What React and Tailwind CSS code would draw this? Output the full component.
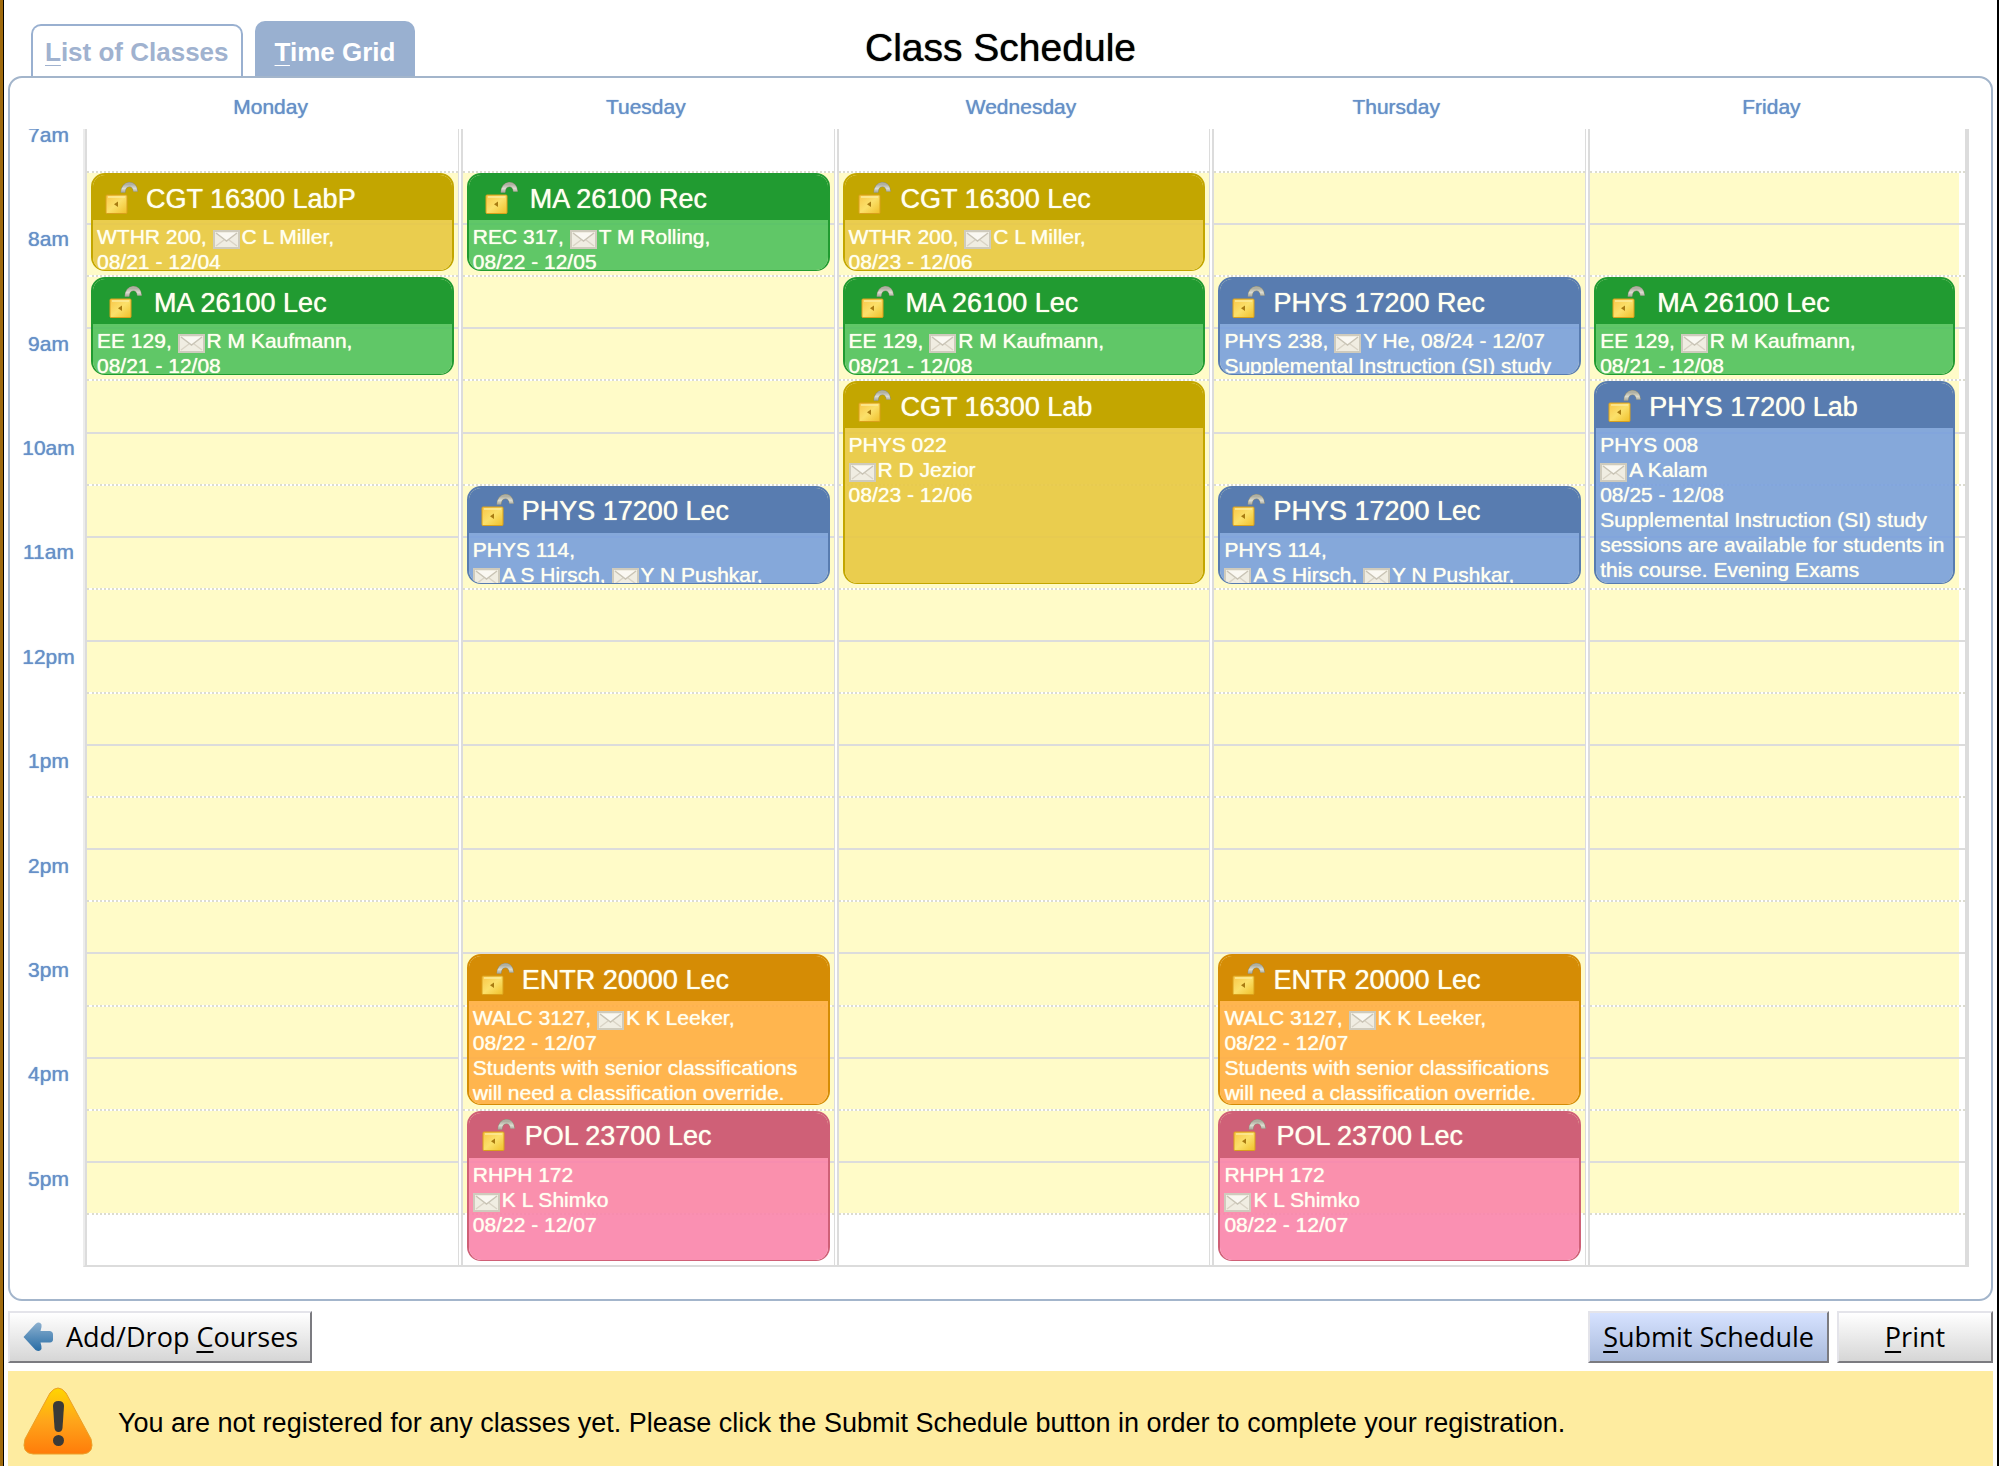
import React from "react";

const THEMES = {
  gold: { frame: "border-[#c3a600]", head: "bg-[#c3a600]", body: "bg-[#e8c840]/90" },
  green: { frame: "border-[#219b31]", head: "bg-[#219b31]", body: "bg-[#4fc15c]/90" },
  blue: { frame: "border-[#587cb0]", head: "bg-[#587cb0]", body: "bg-[#789fdc]/90" },
  orange: { frame: "border-[#d58c05]", head: "bg-[#d58c05]", body: "bg-[#ffad40]/90" },
  pink: { frame: "border-[#cf6077]", head: "bg-[#cf6077]", body: "bg-[#fa84aa]/90" },
};

const INSETS = {
  wide: "pl-3 gap-2",
  medium: "pl-[13px] gap-2.5",
  narrow: "pl-4 gap-3",
};

const SLOTS = {
  "7:30-8:30": "row-[2/4]",
  "8:30-9:30": "row-[4/6]",
  "9:30-11:30": "row-[6/10]",
  "10:30-11:30": "row-[8/10]",
  "15:00-16:30": "row-[17/20]",
  "16:30-18:00": "row-[20/23]",
};

const HOURS = ["7am", "8am", "9am", "10am", "11am", "12pm", "1pm", "2pm", "3pm", "4pm", "5pm"];

const phys114 = {
  slot: "10:30-11:30", theme: "blue", inset: "wide", title: "PHYS 17200 Lec",
  lines: ["PHYS 114,", ["@", "A S Hirsch, ", "@", "Y N Pushkar,"]],
};
const entr = {
  slot: "15:00-16:30", theme: "orange", inset: "wide", title: "ENTR 20000 Lec",
  lines: [
    ["WALC 3127, ", "@", "K K Leeker,"], "08/22 - 12/07",
    "Students with senior classifications", "will need a classification override.",
  ],
};
const pol = {
  slot: "16:30-18:00", theme: "pink", inset: "medium", title: "POL 23700 Lec",
  lines: ["RHPH 172", ["@", "K L Shimko"], "08/22 - 12/07"],
};
const maLec = {
  slot: "8:30-9:30", theme: "green", inset: "narrow", title: "MA 26100 Lec",
  lines: [["EE 129, ", "@", "R M Kaufmann,"], "08/21 - 12/08"],
};

const DAYS = [
  {
    name: "Monday",
    events: [
      {
        slot: "7:30-8:30", theme: "gold", inset: "wide", title: "CGT 16300 LabP",
        lines: [["WTHR 200, ", "@", "C L Miller,"], "08/21 - 12/04"],
      },
      maLec,
    ],
  },
  {
    name: "Tuesday",
    events: [
      {
        slot: "7:30-8:30", theme: "green", inset: "narrow", title: "MA 26100 Rec",
        lines: [["REC 317, ", "@", "T M Rolling,"], "08/22 - 12/05"],
      },
      phys114, entr, pol,
    ],
  },
  {
    name: "Wednesday",
    events: [
      {
        slot: "7:30-8:30", theme: "gold", inset: "medium", title: "CGT 16300 Lec",
        lines: [["WTHR 200, ", "@", "C L Miller,"], "08/23 - 12/06"],
      },
      maLec,
      {
        slot: "9:30-11:30", theme: "gold", inset: "medium", title: "CGT 16300 Lab",
        lines: ["PHYS 022", ["@", "R D Jezior"], "08/23 - 12/06"],
      },
    ],
  },
  {
    name: "Thursday",
    events: [
      {
        slot: "8:30-9:30", theme: "blue", inset: "wide", title: "PHYS 17200 Rec",
        lines: [["PHYS 238, ", "@", "Y He, 08/24 - 12/07"], "Supplemental Instruction (SI) study"],
      },
      phys114, entr, pol,
    ],
  },
  {
    name: "Friday",
    events: [
      maLec,
      {
        slot: "9:30-11:30", theme: "blue", inset: "wide", title: "PHYS 17200 Lab",
        lines: [
          "PHYS 008", ["@", "A Kalam"], "08/25 - 12/08", "Supplemental Instruction (SI) study",
          "sessions are available for students in", "this course. Evening Exams",
        ],
      },
    ],
  },
];

function UnlockIcon() {
  return (
    <svg viewBox="0 0 33 34" className="h-[34px] w-[33px] shrink-0" aria-hidden="true">
      <defs>
        <linearGradient id="lockBody" x1="0" y1="0" x2="1" y2="1">
          <stop offset="0" stopColor="#f9c648" />
          <stop offset="0.5" stopColor="#fbe06a" />
          <stop offset="1" stopColor="#f0c02a" />
        </linearGradient>
        <linearGradient id="lockShackle" x1="0" y1="0" x2="0" y2="1">
          <stop offset="0" stopColor="#b0b0a2" />
          <stop offset="0.5" stopColor="#dcdcd0" />
          <stop offset="1" stopColor="#a4a498" />
        </linearGradient>
      </defs>
      <path d="M18 11.500C18 1.500 30 0.500 30.500 10.500" fill="none" stroke="#8f8f79" strokeWidth="5" />
      <path d="M18 11.500C18 1.500 30 0.500 30.500 10.500" fill="none" stroke="url(#lockShackle)" strokeWidth="4" />
      <rect x="1" y="14" width="21" height="18.500" rx="1" fill="url(#lockBody)" stroke="#d9a01c" />
      <path d="M3 16h17" stroke="#fdeb9a" strokeWidth="1.500" />
      <path d="M13 20.500v5.500l-4-2.750z" fill="#a87b12" />
    </svg>
  );
}

function MailIcon() {
  return (
    <svg viewBox="0 0 27 19" className="mr-0.5 inline-block h-[19px] w-[27px] align-[-5px]" role="img" aria-label="Email">
      <rect x="1" y="1" width="25" height="17" fill="#f0ede2" stroke="#cfcbbd" strokeWidth="2" />
      <path d="M3 16l8-6M24 16l-8-6" stroke="#d9d4c6" strokeWidth="1.500" />
      <path d="M3 3l10.500 8L24 3" fill="#faf8f2" stroke="#c9c4b6" strokeWidth="1.500" />
    </svg>
  );
}

function Line({ parts }) {
  const list = Array.isArray(parts) ? parts : [parts];
  return (
    <div className="h-[25px] whitespace-pre">
      {list.map((p, i) => (p === "@" ? <MailIcon key={i} /> : <span key={i}>{p}</span>))}
    </div>
  );
}

function Meeting({ event, last }) {
  const t = THEMES[event.theme];
  return (
    <article
      className={`${SLOTS[event.slot]} ${t.frame} ${last ? "mr-2.5" : "mr-1"} relative col-start-1 mt-0.5 mb-1 ml-1 flex min-h-0 flex-col overflow-hidden rounded-[14px] border-2 border-b text-[#fffff0] [text-shadow:0_0_1px_currentColor]`}
    >
      <header className={`${t.head} ${INSETS[event.inset]} flex h-[45px] shrink-0 items-center`}>
        <UnlockIcon />
        <h3 className="pt-0.5 text-[27px] leading-8 whitespace-nowrap">{event.title}</h3>
      </header>
      <div className={`${t.body} min-h-0 grow overflow-hidden pt-1 pl-1 text-[21px] leading-[25px]`}>
        {event.lines.map((l, i) => (
          <Line key={i} parts={l} />
        ))}
      </div>
    </article>
  );
}

function Day({ day, last }) {
  return (
    <section
      aria-label={day.name}
      className={`${last ? "basis-2.5 border-r-4" : "basis-0 border-r"} grid min-w-0 grow grid-cols-1 grid-rows-[repeat(22,minmax(0,1fr))] border-l-2 border-[#dcdcdc]`}
    >
      {HOURS.flatMap((h, i) => [
        <div
          key={h}
          style={{ gridRow: i * 2 + 1 }}
          className="col-start-1 flex border-t-2 border-t-[#dcdcdc]"
        >
          <div className={`${i > 0 ? "bg-[#fffbc8]" : ""} ${last ? "mr-1.5" : ""} grow`} />
        </div>,
        <div
          key={h + "half"}
          style={{ gridRow: i * 2 + 2 }}
          className="col-start-1 flex border-t-2 border-dotted border-t-[#dcdcd0]"
        >
          <div className={`${i < 10 ? "bg-[#fffbc8]" : ""} ${last ? "mr-1.5" : ""} grow`} />
        </div>,
      ])}
      {day.events.map((e) => (
        <Meeting key={e.slot} event={e} last={last} />
      ))}
    </section>
  );
}

const buttonBase =
  "flex h-[52px] items-center justify-center border-2 border-t-[#e4e4ea] border-l-[#e4e4ea] border-r-[#7b7b80] border-b-[#7b7b80] font-['Open_Sans','Noto_Sans',sans-serif] text-[27px] leading-8 text-black";

function BackArrow() {
  return (
    <svg viewBox="0 0 32 32" className="h-8 w-8 shrink-0" aria-hidden="true">
      <defs>
        <linearGradient id="arrowFill" x1="0" y1="0" x2="0" y2="1">
          <stop offset="0" stopColor="#8cb0cf" />
          <stop offset="1" stopColor="#276ca5" />
        </linearGradient>
      </defs>
      <path
        d="M1.500 16L13.500 3Q17.500 0 19.500 3.500Q20 6 18.500 10H28Q31 10.500 31 13.500V18.500Q31 21 28 21.500H18.500Q20 26 19.500 28Q17.500 31.500 13.500 29Z"
        fill="url(#arrowFill)"
      />
    </svg>
  );
}

function WarningIcon() {
  return (
    <svg viewBox="0 0 70 68" className="h-[68px] w-[70px] shrink-0" aria-hidden="true">
      <defs>
        <linearGradient id="warnFill" x1="0" y1="0" x2="0" y2="1">
          <stop offset="0" stopColor="#ffd500" />
          <stop offset="0.500" stopColor="#ffa51a" />
          <stop offset="1" stopColor="#ff7c0a" />
        </linearGradient>
      </defs>
      <path
        d="M27 6Q35 -4 43 6L68 52Q72 66 60 67H10Q-2 66 2 52Z"
        fill="url(#warnFill)"
        stroke="#eba028"
      />
      <path d="M30 19Q30 14 35.500 14Q41 14 41 19L39.500 41Q39 45 35.500 45Q32 45 31.500 41Z" fill="#3a3a38" />
      <circle cx="35.500" cy="53.500" r="5.500" fill="#3a3a38" />
    </svg>
  );
}

export default function App() {
  return (
    <div className="flex min-h-screen border-r-2 border-l-[3px] border-r-black border-l-[#a06a0c] bg-white font-['Liberation_Sans',Arial,sans-serif]">
      <div className="flex min-w-0 grow flex-col border-l border-black px-1">
        <header className="grid grid-cols-[1fr_auto_1fr] items-end">
          <div className="flex items-end gap-3 pt-[21px] pl-[23px]" role="tablist">
            <button role="tab" aria-selected="false" className="h-[52px] rounded-t-[10px] border-2 border-b-0 border-[#99b0d0] px-3 pt-0.5 text-[26px] leading-8 font-bold whitespace-nowrap text-[#a0b2cf]">
              <span className="underline decoration-1 underline-offset-4">L</span>ist of Classes
            </button>
            <button role="tab" aria-selected="true" className="h-[55px] rounded-t-[10px] bg-[#99b0d0] px-5 pt-1.5 text-[26px] leading-8 font-bold whitespace-nowrap text-white">
              <span className="underline decoration-1 underline-offset-4">T</span>ime Grid
            </button>
          </div>
          <h1 className="pb-2 text-[39px] leading-[40px] text-black [text-shadow:0_0_1px_currentColor]">Class Schedule</h1>
        </header>

        <main className="rounded-[14px] border-2 border-[#a3b5cb] pr-[22px] pb-8">
          <div className="flex h-[51px] items-center pt-1.5 pr-2.5 pl-[73px] text-[21px] leading-6 text-[#6690c8] [text-shadow:0_0_1px_currentColor]">
            {DAYS.map((d) => (
              <h2 key={d.name} className="grow basis-0 text-center">{d.name}</h2>
            ))}
          </div>
          <div className="overflow-hidden">
            <div className="-mt-2.5 flex h-[1148px]">
              <div className="grid w-[73px] shrink-0 grid-rows-[repeat(11,minmax(0,1fr))] pl-1 text-center text-[21px] leading-6 text-[#6690c8] [text-shadow:0_0_1px_currentColor]">
                {HOURS.map((h) => (
                  <div key={h} className="pt-1">{h}</div>
                ))}
              </div>
              <div className="flex grow gap-0.5 border-b-2 border-l-2 border-b-[#dcdcdc] border-l-[#ececec]">
                {DAYS.map((d, i) => (
                  <Day key={d.name} day={d} last={i === 4} />
                ))}
              </div>
            </div>
          </div>
        </main>

        <div className="flex items-center gap-2 pt-2.5 pb-2">
          <button className={`${buttonBase} mr-auto gap-3 bg-linear-to-b from-white to-[#d6d6d6] pr-3 pl-3`}>
            <BackArrow />
            <span>Add/Drop <span className="underline decoration-2 underline-offset-4">C</span>ourses</span>
          </button>
          <button className={`${buttonBase} bg-linear-to-b from-[#d6e2ff] to-[#aabbdc] px-[13px]`}>
            <span><span className="underline decoration-2 underline-offset-4">S</span>ubmit Schedule</span>
          </button>
          <button className={`${buttonBase} w-[156px] bg-linear-to-b from-white to-[#d6d6d6]`}>
            <span><span className="underline decoration-2 underline-offset-4">P</span>rint</span>
          </button>
        </div>

        <div role="alert" className="flex grow items-center gap-[25px] bg-[#feeca0] pt-4 pb-3 pl-[15px] text-[27px] leading-8 text-black">
          <WarningIcon />
          <p className="pt-1">You are not registered for any classes yet. Please click the Submit Schedule button in order to complete your registration.</p>
        </div>
      </div>
    </div>
  );
}
